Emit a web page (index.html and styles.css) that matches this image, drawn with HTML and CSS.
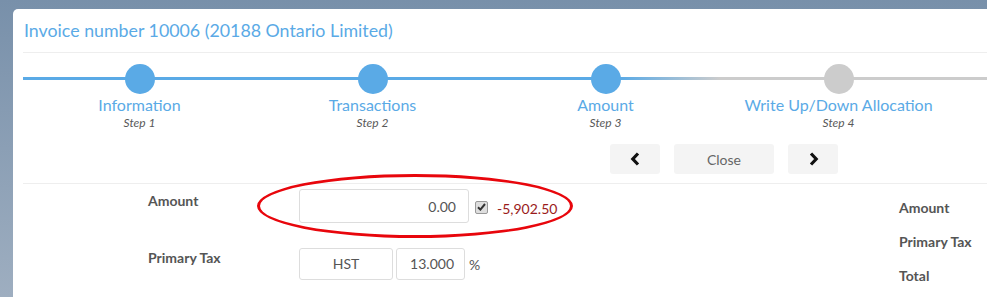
FILE: index.html
```html
<!DOCTYPE html>
<html lang="en">
<head>
  <meta charset="UTF-8">
  <meta name="viewport" content="width=device-width, initial-scale=1.0">
  <title>Invoice number 10006</title>
  <link rel="stylesheet" href="styles.css">
</head>
<body>
  <div class="modal">
    <header class="modal-header">
      <h4 class="modal-title">Invoice number 10006 (20188 Ontario Limited)</h4>
    </header>

    <!-- wizard steps -->
    <div class="wizard">
      <div class="wizard-step">
        <span class="wizard-dot"></span>
        <div class="wizard-name">Information</div>
        <div class="wizard-info">Step 1</div>
      </div>
      <div class="wizard-step">
        <span class="wizard-dot"></span>
        <div class="wizard-name">Transactions</div>
        <div class="wizard-info">Step 2</div>
      </div>
      <div class="wizard-step">
        <span class="wizard-dot"></span>
        <div class="wizard-name">Amount</div>
        <div class="wizard-info">Step 3</div>
      </div>
      <div class="wizard-step is-disabled">
        <span class="wizard-dot"></span>
        <div class="wizard-name">Write Up/Down Allocation</div>
        <div class="wizard-info">Step 4</div>
      </div>
    </div>

    <div class="wizard-nav">
      <button class="btn btn-icon" type="button" aria-label="Previous">
        <svg width="11" height="14" viewBox="0 0 11 14"><polyline points="8,1.5 2.8,7 8,12.5" fill="none" stroke="#111" stroke-width="3.2"/></svg>
      </button>
      <button class="btn btn-close" type="button">Close</button>
      <button class="btn btn-icon" type="button" aria-label="Next">
        <svg width="11" height="14" viewBox="0 0 11 14"><polyline points="3,1.5 8.2,7 3,12.5" fill="none" stroke="#111" stroke-width="3.2"/></svg>
      </button>
    </div>

    <div class="modal-body">
      <div class="form">
        <div class="form-row">
          <label class="form-label">Amount</label>
          <div class="form-controls">
            <input class="form-input amount-input" type="text" value="0.00">
            <span class="check-box">
              <svg width="9" height="8" viewBox="0 0 9 8"><polyline points="1,4.2 3.4,6.6 8,1" fill="none" stroke="#333" stroke-width="2"/></svg>
            </span>
            <span class="balance">-5,902.50</span>
          </div>
          <!-- 标记出来的红圈 -->
          <span class="highlight"></span>
        </div>
        <div class="form-row form-row-tax">
          <label class="form-label">Primary Tax</label>
          <div class="form-controls">
            <span class="form-box tax-code">HST</span>
            <span class="form-box tax-rate">13.000</span>
            <span class="unit">%</span>
          </div>
        </div>
      </div>

      <ul class="summary">
        <li>Amount</li>
        <li>Primary Tax</li>
        <li>Total</li>
      </ul>
    </div>
  </div>
</body>
</html>
```

FILE: styles.css
```css
*,
*::before,
*::after {
  box-sizing: border-box;
}
html,
body {
  height: 100%;
}
body {
  margin: 0;
  overflow: hidden;
  font-family: Lato, "Open Sans", sans-serif;
  font-size: 14px;
  color: #555;
  background: linear-gradient(#7890aa, #9eaec0);
}

/* 弹窗主体 */
.modal {
  margin: 9px 0 0 13px;
  height: calc(100% - 9px);
  overflow: hidden;
  padding-left: 10px;
  background-color: #fff;
  border-radius: 5px 0 0 0;
}
.modal-header {
  padding: 11px 0 12px;
  border-bottom: 1px solid #eee;
}
.modal-title {
  margin: 0 0 0 1px;
  font-size: 17.8px;
  font-weight: normal;
  line-height: 20px;
  color: #5aaae6;
}

/* 步骤条 */
.wizard {
  display: flex;
  padding-top: 11px;
  background: linear-gradient(to right, #5aaae6 0, #5aaae6 597px, #ccc 697px, #ccc 100%) no-repeat 0 24px / 100% 3px;
}
.wizard-step {
  flex: none;
  width: 233px;
  text-align: center;
}
.wizard-dot {
  display: block;
  width: 30px;
  height: 30px;
  margin: 0 auto;
  border-radius: 50%;
  background-color: #5aaae6;
}
.wizard-step.is-disabled .wizard-dot {
  background-color: #ccc;
}
.wizard-name {
  margin-top: 1px;
  font-size: 16px;
  line-height: 20px;
  color: #5aaae6;
}
.wizard-info {
  font-size: 12px;
  line-height: 16px;
  font-style: italic;
  color: #595959;
}

.wizard-nav {
  display: flex;
  gap: 14px;
  padding: 13px 0 9px 587px;
  border-bottom: 1px solid #eee;
}
.btn {
  height: 30px;
  border: 0;
  border-radius: 3px;
  background-color: #f4f4f4;
  font-family: inherit;
  font-size: 14px;
  color: #666;
  padding: 0;
}
.btn-icon {
  width: 50px;
  display: flex;
  align-items: center;
  justify-content: center;
}
.btn-close {
  width: 100px;
}

/* 表单部分 */
.modal-body {
  display: flex;
}
.form {
  flex: none;
  width: 876px;
}
.form-row {
  position: relative;
  display: flex;
  margin-top: 5px;
}
.form-row-tax {
  margin-top: 25px;
}
.form-label {
  width: 276px;
  padding: 2px 0 0 125px;
  line-height: 20px;
  font-weight: bold;
}
.form-row-tax .form-label {
  padding-top: 0;
}
.form-controls {
  display: flex;
  align-items: center;
}
.form-input,
.form-box {
  border: 1px solid #ddd;
  border-radius: 3px;
  font-family: inherit;
  font-size: 14px;
  color: #555;
}
.amount-input {
  width: 170px;
  height: 34px;
  padding: 0 12px;
  text-align: right;
  outline: none;
}
.check-box {
  display: flex;
  align-items: center;
  justify-content: center;
  width: 13px;
  height: 13px;
  margin: 2px 0 0 6px;
  border: 1px solid #999;
  border-radius: 2px;
  background-color: #dedede;
}
.balance {
  margin: 4px 0 0 9px;
  color: #9a1b1b;
}
.form-box {
  height: 32px;
  line-height: 30px;
}
.tax-code {
  width: 94px;
  text-align: center;
}
.tax-rate {
  width: 69px;
  margin-left: 3px;
  padding-right: 10px;
  text-align: right;
}
.unit {
  margin-left: 4px;
}

/* 红色椭圆标注 */
.highlight {
  position: absolute;
  left: 234px;
  top: -15px;
  width: 316px;
  height: 64px;
  border: 3px solid #e8060c;
  border-radius: 50%;
  pointer-events: none;
}

.summary {
  margin: 7px 0 0;
  padding: 0;
  list-style: none;
  font-weight: bold;
  line-height: 34px;
  white-space: nowrap;
}
```
